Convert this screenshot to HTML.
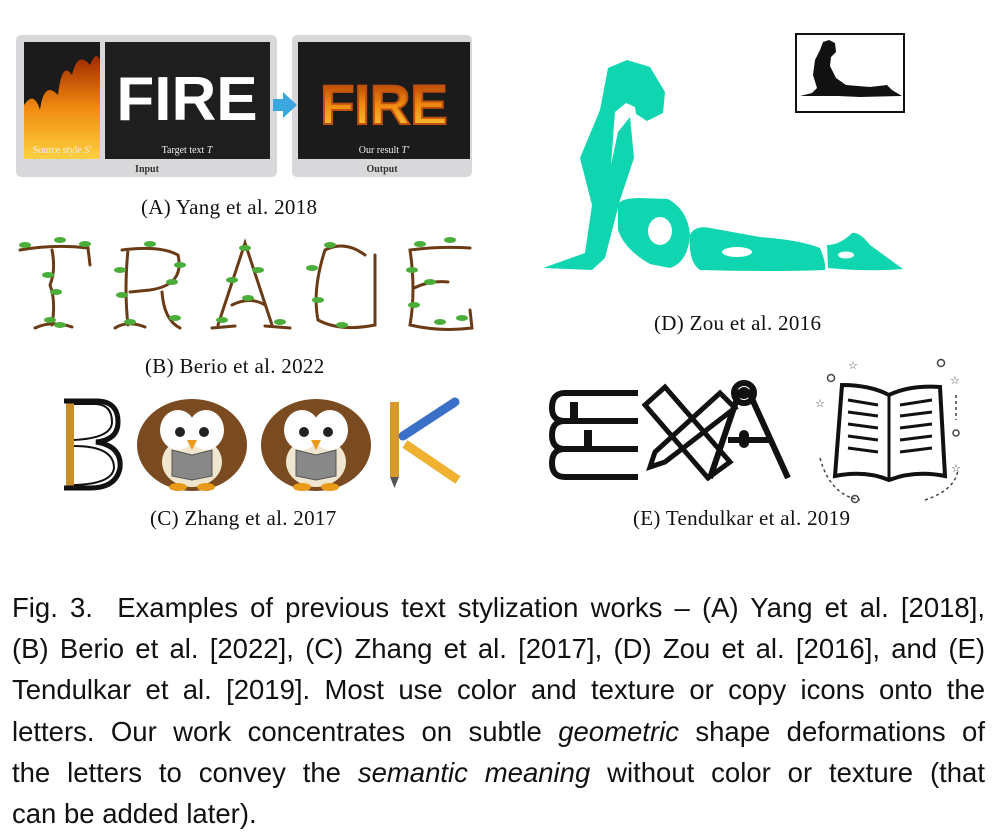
<!DOCTYPE html>
<html><head><meta charset="utf-8"><style>
html,body{margin:0;padding:0;background:#fff;width:1003px;height:835px;overflow:hidden}
.cap{position:absolute;font-family:"Liberation Serif",serif;font-size:21px;color:#111;white-space:nowrap;letter-spacing:0.3px}
#para{position:absolute;left:12px;top:587px;width:973px;font-family:"Liberation Sans",sans-serif;font-size:27.5px;line-height:41.2px;color:#111}
#para div{text-align:justify;text-align-last:justify;white-space:nowrap}
#para div.l{text-align-last:left}
</style></head><body>
<svg width="1003" height="580" style="position:absolute;left:0;top:0" xmlns="http://www.w3.org/2000/svg">
<defs>
<linearGradient id="fire" x1="0" y1="1" x2="0" y2="0"><stop offset="0" stop-color="#ffd040"/><stop offset="0.5" stop-color="#f08a10"/><stop offset="1" stop-color="#a02800"/></linearGradient>
</defs>
<rect x="16" y="35" width="261" height="142" rx="5" fill="#d8d8da"/>
<rect x="292" y="35" width="180" height="142" rx="5" fill="#d8d8da"/>
<rect x="24" y="42" width="76" height="117" fill="#1b1b1b"/>
<path d="M24 159 L24 105 Q34 90 40 110 Q44 80 58 95 Q62 60 72 75 Q78 50 90 65 Q96 50 100 60 L100 159Z" fill="url(#fire)"/>
<rect x="105" y="42" width="165" height="117" fill="#1e1e1e"/>
<text x="187" y="120" font-family="Liberation Sans" font-weight="bold" font-size="62" fill="#fff" text-anchor="middle">FIRE</text>
<rect x="298" y="42" width="172" height="117" fill="#1b1b1b"/>
<text x="384" y="124" font-family="Liberation Sans" font-weight="bold" font-size="56" fill="url(#fire)" text-anchor="middle" stroke="#c05010" stroke-width="2">FIRE</text>
<path d="M273 99 L283 99 L283 92 L297 105 L283 118 L283 111 L273 111Z" fill="#3aa7e0"/>
<g font-family="Liberation Serif" font-size="10" fill="#eee" text-anchor="middle">
<text x="62" y="153">Source style <tspan font-style="italic">S'</tspan></text>
<text x="187" y="153">Target text <tspan font-style="italic">T</tspan></text>
<text x="384" y="153">Our result <tspan font-style="italic">T'</tspan></text>
</g>
<g font-family="Liberation Serif" font-size="10" font-weight="bold" fill="#333" text-anchor="middle">
<text x="147" y="172">Input</text><text x="382" y="172">Output</text></g>
<g fill="none" stroke="#6b3b16" stroke-width="3" stroke-linecap="round">
<path d="M20 250 Q55 244 88 248 L90 265 M52 250 Q56 270 50 285 Q56 300 52 325 M35 328 Q52 320 72 327"/>
<path d="M128 250 Q124 290 128 325 M122 250 Q160 245 178 255 Q185 285 150 290 L130 292 M162 292 Q164 320 180 328 M115 328 Q128 320 145 327"/>
<path d="M218 325 L245 243 L272 325 M232 305 Q250 296 265 305 M212 328 L235 326 M265 326 L290 328"/>
<path d="M365 255 Q345 240 325 250 Q312 290 318 320 Q340 332 375 325 L375 255"/>
<path d="M470 248 Q440 246 410 250 Q416 290 410 325 Q440 332 472 328 L470 310 M414 288 Q430 280 448 282"/>
</g>
<g fill="#4cae3a">
<ellipse cx="25" cy="245" rx="6" ry="3"/><ellipse cx="60" cy="240" rx="6" ry="3"/><ellipse cx="85" cy="244" rx="6" ry="3"/><ellipse cx="48" cy="275" rx="6" ry="3"/><ellipse cx="56" cy="292" rx="6" ry="3"/><ellipse cx="50" cy="320" rx="6" ry="3"/><ellipse cx="60" cy="325" rx="6" ry="3"/>
<ellipse cx="120" cy="270" rx="6" ry="3"/><ellipse cx="150" cy="244" rx="6" ry="3"/><ellipse cx="180" cy="265" rx="6" ry="3"/><ellipse cx="172" cy="282" rx="6" ry="3"/><ellipse cx="122" cy="295" rx="6" ry="3"/><ellipse cx="175" cy="318" rx="6" ry="3"/><ellipse cx="130" cy="322" rx="6" ry="3"/>
<ellipse cx="245" cy="248" rx="6" ry="3"/><ellipse cx="232" cy="280" rx="6" ry="3"/><ellipse cx="258" cy="270" rx="6" ry="3"/><ellipse cx="248" cy="298" rx="6" ry="3"/><ellipse cx="222" cy="320" rx="6" ry="3"/><ellipse cx="280" cy="322" rx="6" ry="3"/>
<ellipse cx="330" cy="245" rx="6" ry="3"/><ellipse cx="312" cy="268" rx="6" ry="3"/><ellipse cx="318" cy="300" rx="6" ry="3"/><ellipse cx="342" cy="325" rx="6" ry="3"/>
<ellipse cx="420" cy="244" rx="6" ry="3"/><ellipse cx="450" cy="240" rx="6" ry="3"/><ellipse cx="412" cy="270" rx="6" ry="3"/><ellipse cx="430" cy="282" rx="6" ry="3"/><ellipse cx="414" cy="305" rx="6" ry="3"/><ellipse cx="440" cy="322" rx="6" ry="3"/><ellipse cx="462" cy="318" rx="6" ry="3"/>
</g>
<rect x="66" y="402" width="8" height="86" fill="#c8902a"/>
<path d="M64 401 L98 401 Q118 402 118 422 Q118 440 96 442 Q122 446 120 468 Q116 488 90 488 L64 488" fill="none" stroke="#111" stroke-width="5"/>
<path d="M74 404 L96 404 Q112 405 112 422 Q112 438 74 440 M74 446 Q114 446 114 468 Q112 484 74 485" fill="none" stroke="#111" stroke-width="2"/>
<g>
<ellipse cx="192" cy="445" rx="55" ry="46" fill="#7a4a20"/>
<ellipse cx="192" cy="462" rx="30" ry="25" fill="#f0e6d0"/>
<ellipse cx="178" cy="430" rx="18" ry="20" fill="#fff"/><ellipse cx="206" cy="430" rx="18" ry="20" fill="#fff"/>
<circle cx="180" cy="432" r="5" fill="#222"/><circle cx="204" cy="432" r="5" fill="#222"/>
<path d="M187 440 L197 440 L192 450Z" fill="#e89a18"/>
<path d="M172 450 L192 455 L212 450 L212 476 L192 480 L172 476Z" fill="#888" stroke="#555"/>
<ellipse cx="178" cy="487" rx="9" ry="4" fill="#e89a18"/><ellipse cx="206" cy="487" rx="9" ry="4" fill="#e89a18"/>
</g>
<g transform="translate(124,0)">
<ellipse cx="192" cy="445" rx="55" ry="46" fill="#7a4a20"/>
<ellipse cx="192" cy="462" rx="30" ry="25" fill="#f0e6d0"/>
<ellipse cx="178" cy="430" rx="18" ry="20" fill="#fff"/><ellipse cx="206" cy="430" rx="18" ry="20" fill="#fff"/>
<circle cx="180" cy="432" r="5" fill="#222"/><circle cx="204" cy="432" r="5" fill="#222"/>
<path d="M187 440 L197 440 L192 450Z" fill="#e89a18"/>
<path d="M172 450 L192 455 L212 450 L212 476 L192 480 L172 476Z" fill="#888" stroke="#555"/>
<ellipse cx="178" cy="487" rx="9" ry="4" fill="#e89a18"/><ellipse cx="206" cy="487" rx="9" ry="4" fill="#e89a18"/>
</g>
<rect x="390" y="402" width="9" height="75" fill="#d8982a"/><path d="M390 477 L399 477 L394.5 488Z" fill="#555"/>
<path d="M403 436 L455 402" stroke="#3a70c8" stroke-width="9" stroke-linecap="round"/>
<path d="M405 444 L458 480" stroke="#f0b030" stroke-width="9"/>
<path d="M543 268 L585 253 L592 205 L580 158 L600 110 L608 68 L627 60 L650 67 L665 92 L663 113 L647 121 L636 114 L635 107 L626 103 L615 112 L611 165 L618 132 L630 117 L634 158 L620 200 L605 258 L592 270Z" fill="#0fd6b0"/>
<path d="M618 205 Q620 198 640 198 L668 199 Q688 210 690 235 Q688 262 670 268 L650 264 Q625 250 618 230Z" fill="#0fd6b0"/>
<ellipse cx="660" cy="231" rx="12" ry="14" fill="#fff"/>
<path d="M690 235 Q695 225 710 228 L760 237 Q800 240 820 248 Q826 262 825 270 Q770 272 700 270 Q688 262 690 235Z" fill="#0fd6b0"/>
<ellipse cx="737" cy="252" rx="15" ry="5" fill="#fff"/>
<path d="M827 245 Q840 245 852 233 Q860 232 870 245 L903 269 Q870 272 828 268Z" fill="#0fd6b0"/>
<ellipse cx="846" cy="255" rx="8" ry="3.5" fill="#fff"/>
<rect x="796" y="34" width="108" height="78" fill="#fff" stroke="#111" stroke-width="2"/>
<path d="M800 96 L812 93 L817 88 L813 75 L815 60 L820 50 L823 42 L829 40 L835 43 L836 52 L831 57 L830 66 L836 78 L846 85 L870 87 L887 85 L892 90 L902 96 L860 97 L838 96Z" fill="#111"/>
<g fill="none" stroke="#111" stroke-width="6">
<path d="M638 393 L565 393 Q552 393 552 408 Q552 421 565 421 L638 421 M565 421 Q552 421 552 435 Q552 449 565 449 L638 449 M565 449 Q552 449 552 463 Q552 477 565 477 L638 477"/>
<path d="M645 405 L665 387 L730 462 L708 478Z" stroke-width="5"/>
<path d="M720 393 L735 408 L665 462 L650 467 L655 452Z" stroke-width="5"/>
<path d="M740 390 L710 478 M748 390 L788 478 M728 440 L770 440"/>
<circle cx="744" cy="393" r="10"/>
<path d="M842 385 Q870 385 889 395 Q910 385 940 387 L945 476 Q915 470 889 480 Q865 470 835 476Z" stroke-width="4"/>
<path d="M889 395 L889 480 M848 400 L878 405 M848 412 L878 416 M848 424 L878 428 M848 436 L878 440 M848 448 L878 452 M900 405 L932 400 M900 416 L932 412 M900 428 L932 424 M900 440 L932 436 M900 452 L932 448" stroke-width="3"/>
</g>
<rect x="570" y="402" width="8" height="18" fill="#111"/><rect x="584" y="430" width="8" height="18" fill="#111"/>
<circle cx="744" cy="393" r="6" fill="#111"/><rect x="739" y="430" width="10" height="18" rx="5" fill="#111"/>
<g fill="none" stroke="#444" stroke-width="1.5"><circle cx="941" cy="363" r="3.5"/><circle cx="831" cy="378" r="3.5"/><circle cx="956" cy="433" r="3"/><circle cx="855" cy="499" r="3.5"/>
<path d="M820 458 Q830 495 860 500 M925 500 Q955 490 958 470 M956 395 L956 420" stroke-dasharray="3 3"/></g>
<g font-size="11" fill="#444" font-family="DejaVu Sans"><text x="848" y="369">☆</text><text x="950" y="384">☆</text><text x="815" y="407">☆</text><text x="951" y="472">☆</text></g>
</svg>
<div class="cap" style="left:141px;top:195px">(A) Yang et al. 2018</div>
<div class="cap" style="left:145px;top:354px">(B) Berio et al. 2022</div>
<div class="cap" style="left:150px;top:506px">(C) Zhang et al. 2017</div>
<div class="cap" style="left:654px;top:311px">(D) Zou et al. 2016</div>
<div class="cap" style="left:633px;top:506px">(E) Tendulkar et al. 2019</div>
<div id="para">
<div>Fig. 3.&nbsp; Examples of previous text stylization works – (A) Yang et al. [2018],</div>
<div>(B) Berio et al. [2022], (C) Zhang et al. [2017], (D) Zou et al. [2016], and (E)</div>
<div>Tendulkar et al. [2019]. Most use color and texture or copy icons onto the</div>
<div>letters. Our work concentrates on subtle <i>geometric</i> shape deformations of</div>
<div>the letters to convey the <i>semantic meaning</i> without color or texture (that</div>
<div class="l">can be added later).</div>
</div>
</body></html>
